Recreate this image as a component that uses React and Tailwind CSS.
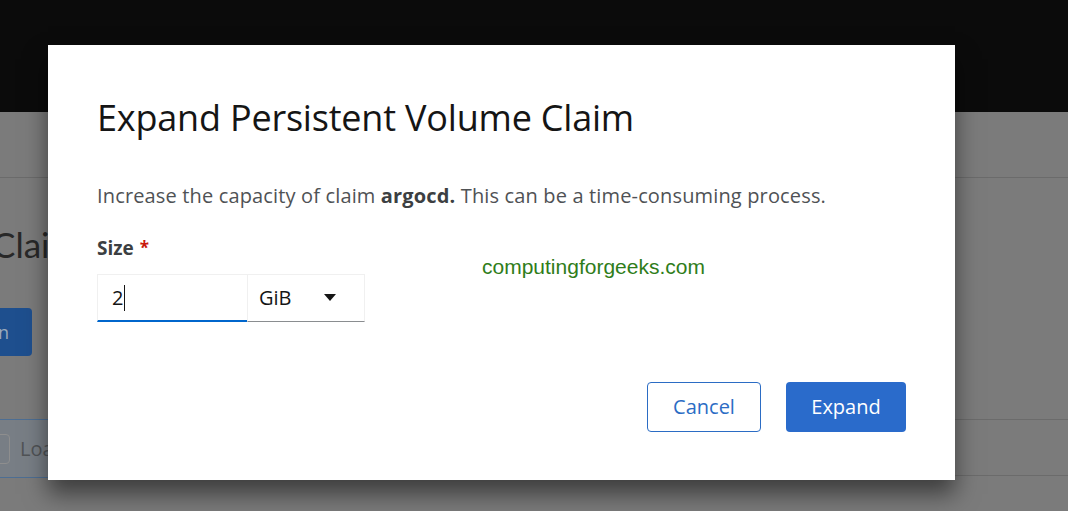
import React from "react";

export default function App() {
  return (
    <div className="relative w-[1068px] h-[511px] overflow-hidden bg-[#7b7b7b] font-['Open_Sans',sans-serif]">
      {/* background page (dimmed) */}
      <div className="h-[112px] bg-[#0b0b0b]" />
      <div className="h-[66px] border-b border-[#6b6b6b]" />
      <div className="pt-[44px] h-[120px]">
        <div className="ml-[-8px] font-['Lato',sans-serif] text-[35px] leading-[44px] text-[#282828]">Claims</div>
      </div>
      <div className="h-[50px] mt-[10px]">
        <div className="ml-[-60px] w-[92px] h-[48px] rounded-[4px] bg-[#1e4f8e] text-[#9aa9bb] text-[18px] leading-[48px] pl-[58px]">n</div>
      </div>
      <div className="mt-[61px] h-[57px] border-y border-[#6b6b6b] flex">
        <div className="-my-px w-[60px] h-[57px] shrink-0 box-content border-y border-[#4d6e93] bg-[#787e85] flex items-center">
          <div className="shrink-0 ml-[-14px] w-[24px] h-[30px] border border-[#8e8e8e] rounded-[4px]" />
          <div className="shrink-0 ml-[10px] text-[20px] text-[#505356]">Loading</div>
        </div>
      </div>

      {/* modal */}
      <div className="absolute left-[48px] top-[45px] w-[907px] h-[435px] bg-white shadow-[0_14px_22px_rgba(0,0,0,0.5)] px-[49px] pt-[50px]">
        <h1 className="text-[36px] leading-[46px] text-[#151515] tracking-[-0.2px]">Expand Persistent Volume Claim</h1>
        <p className="mt-[41px] text-[20px] leading-[28px] text-[#4f5255] tracking-[0.15px]">
          Increase the capacity of claim <span className="font-bold text-[#3c3f42]">argocd.</span> This can be a time-consuming process.
        </p>
        <div className="mt-[24px] flex items-center gap-[6px] text-[19px] leading-[28px] font-bold text-[#3c3f42]">
          Size <span className="text-[#c9190b] text-[17px]">*</span>
        </div>
        <div className="mt-[12px] flex items-start">
          <div className="w-[150px] h-[48px] border-t border-l border-[#f0f0f0] border-b-2 border-b-[#0066cc] flex items-center pl-[14px] text-[20px] text-[#151515]">
            2<span className="inline-block w-px h-[26px] bg-[#151515] ml-[1px]" />
          </div>
          <div className="w-[118px] h-[48px] border border-[#f0f0f0] border-b-[#8a8d90] flex items-center pl-[11px] text-[20px] text-[#151515]">
            GiB
            <svg className="ml-[32px]" width="12" height="8" viewBox="0 0 12 8"><path d="M0 0 L12 0 L6 7 Z" fill="#151515" /></svg>
          </div>
          <div className="ml-[117px] mt-[-19px] font-['Liberation_Sans',sans-serif] text-[21px] leading-[24px] text-[#2f7d1a]">computingforgeeks.com</div>
        </div>
        <div className="mt-[60px] flex justify-end gap-[25px] pr-[0px]">
          <button className="w-[114px] h-[50px] rounded-[4px] border border-[#2b6cc4] text-[20px] text-[#2b6cc4] bg-white">Cancel</button>
          <button className="w-[120px] h-[50px] rounded-[4px] bg-[#2a6bcb] text-[20px] text-white">Expand</button>
        </div>
      </div>
    </div>
  );
}
